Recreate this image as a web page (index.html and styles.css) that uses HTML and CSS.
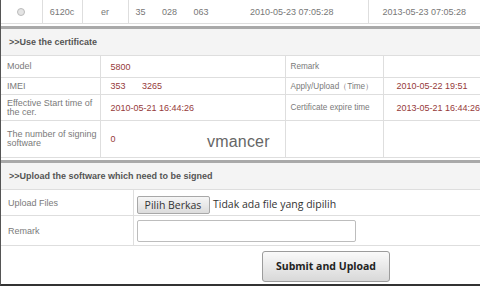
FILE: index.html
```html
<!DOCTYPE html>
<html lang="en">
<head>
    <meta charset="UTF-8">
    <title>Certificate</title>
    <link rel="stylesheet" href="styles.css">
</head>
<body>
    <div class="frame">
        <table class="list">
            <colgroup>
                <col class="w-41"><col class="w-40"><col class="w-46"><col class="w-87"><col class="w-153"><col>
            </colgroup>
            <tr>
                <td class="c-radio"><span class="radio"></span></td>
                <td class="c-center">6120c</td>
                <td class="c-center">er</td>
                <td class="c-imei">35 <span class="gap"></span>028 <span class="gap"></span>063</td>
                <td class="c-date">2010-05-23 07:05:28</td>
                <td class="c-center">2013-05-23 07:05:28</td>
            </tr>
        </table>

        <div class="section-title">&gt;&gt;Use the certificate</div>
        <table class="info">
            <colgroup>
                <col class="w-99"><col class="w-185"><col class="w-98"><col>
            </colgroup>
            <tr class="r-model">
                <td class="label">Model</td>
                <td class="value">5800</td>
                <td class="label side">Remark</td>
                <td class="value side-value"></td>
            </tr>
            <tr class="r-imei">
                <td class="label">IMEI</td>
                <td class="value">353 <span class="gap"></span>3265</td>
                <td class="label side">Apply/Upload（Time）</td>
                <td class="value side-value">2010-05-22 19:51</td>
            </tr>
            <tr class="r-start">
                <td class="label">Effective Start time of the cer.</td>
                <td class="value">2010-05-21 16:44:26</td>
                <td class="label side">Certificate expire time</td>
                <td class="value side-value">2013-05-21 16:44:26</td>
            </tr>
            <tr class="r-count">
                <td class="label">The number of signing software</td>
                <td class="value">0</td>
                <td class="label side"></td>
                <td class="value side-value"></td>
            </tr>
        </table>

        <div class="section-title">&gt;&gt;Upload the software which need to be signed</div>
        <table class="upload">
            <colgroup>
                <col class="w-132"><col>
            </colgroup>
            <tr class="r-file">
                <td class="label">Upload Files</td>
                <td class="field">
                    <span class="file-btn">Pilih Berkas</span>
                    <span class="file-name">Tidak ada file yang dipilih</span>
                </td>
            </tr>
            <tr class="r-remark">
                <td class="label">Remark</td>
                <td class="field"><span class="text-input"></span></td>
            </tr>
            <tr class="r-submit">
                <td colspan="2"><span class="submit">Submit and Upload</span></td>
            </tr>
        </table>

        <div class="watermark">vmancer</div>
    </div>
</body>
</html>
```

FILE: styles.css
```css
body {
    margin: 0;
    background: #fff;
    font-family: 'Liberation Sans', Arial, sans-serif;
    font-size: 9px;
}

.frame {
    position: relative;
    width: 479px;
    height: 284px;
    border-left: 1px solid #555;
    border-bottom: 2px solid #333;
    overflow: hidden;
}

table {
    width: 100%;
    border-collapse: collapse;
    table-layout: fixed;
}

td {
    padding: 0;
    border: 1px solid #dedede;
    border-top: none;
    vertical-align: middle;
    white-space: nowrap;
}

tr > td:first-child {
    border-left: none;
}

tr > td:last-child {
    border-right: none;
}

/* 列宽 */
.w-40  { width: 40px; }
.w-41  { width: 41px; }
.w-46  { width: 46px; }
.w-87  { width: 87px; }
.w-98  { width: 98px; }
.w-99  { width: 99px; }
.w-132 { width: 132px; }
.w-153 { width: 153px; }
.w-185 { width: 185px; }

/* 顶部列表行 */
.list td {
    height: 23px;
    color: #777;
}

.c-radio, .c-center { text-align: center; }
.c-imei  { padding-left: 7px; border-right: none; }
.c-date  { padding-left: 35px; border-left: none; }

.radio {
    display: inline-block;
    width: 6px;
    height: 6px;
    border: 1px solid #bbb;
    border-radius: 50%;
    background: #e4e4e4;
    vertical-align: middle;
}

.gap {
    display: inline-block;
    width: 14px;
}

.section-title {
    margin-top: 2px;
    height: 26px;
    line-height: 26px;
    padding-left: 8px;
    border-top: 3px solid #a9a9a9;
    border-bottom: 1px solid #dedede;
    background: #f4f4f4;
    color: #555;
    font-weight: bold;
}

/* 证书信息 */
.info .label {
    padding-left: 6px;
    color: #7a7a7a;
    line-height: 9px;
    white-space: normal;
}

.info .side {
    padding-left: 5px;
    font-size: 8.2px;
    white-space: nowrap;
}

.info .value {
    padding-left: 10px;
    color: #963a3a;
}

.info .side-value {
    padding-left: 13px;
}

.r-model td { height: 21px; }
.r-imei td  { height: 16px; }
.r-start td { height: 25px; }
.r-count td { height: 36px; }

/* 上传 */
.upload .label {
    padding-left: 7px;
    color: #7a7a7a;
}

.upload .field {
    padding-left: 3px;
}

.r-file td   { height: 25px; }
.r-remark td { height: 29px; }
.r-submit td {
    height: 35px;
    padding-top: 5px;
    vertical-align: top;
    border-bottom: none;
}

.file-btn {
    display: inline-block;
    box-sizing: border-box;
    width: 73px;
    height: 18px;
    line-height: 16px;
    margin-top: 5px;
    text-align: center;
    border: 1px solid #a8a8a8;
    border-radius: 2px;
    background: linear-gradient(#f6f6f6, #dcdcdc);
    color: #333;
    font-family: 'Open Sans', sans-serif;
    font-size: 10.5px;
    vertical-align: top;
}

.file-name {
    display: inline-block;
    margin-top: 4px;
    margin-left: 1px;
    color: #333;
    font-family: 'Open Sans', sans-serif;
    font-size: 10.5px;
    line-height: 18px;
    vertical-align: top;
}

.text-input {
    display: block;
    box-sizing: border-box;
    width: 219px;
    height: 22px;
    border: 1px solid #bdbdbd;
    border-radius: 2px;
    background: #fff;
}

.submit {
    display: block;
    box-sizing: border-box;
    width: 128px;
    height: 31px;
    line-height: 29px;
    margin-left: 261px;
    text-align: center;
    border: 1px solid #9c9c9c;
    border-radius: 3px;
    background: linear-gradient(#fafafa, #d8d8d8);
    color: #222;
    font-family: 'Open Sans', sans-serif;
    font-weight: bold;
    font-size: 10.5px;
}

/* 水印 */
.watermark {
    position: absolute;
    left: 206px;
    top: 133px;
    color: #666;
    font-size: 16px;
    letter-spacing: 0.2px;
}
```
